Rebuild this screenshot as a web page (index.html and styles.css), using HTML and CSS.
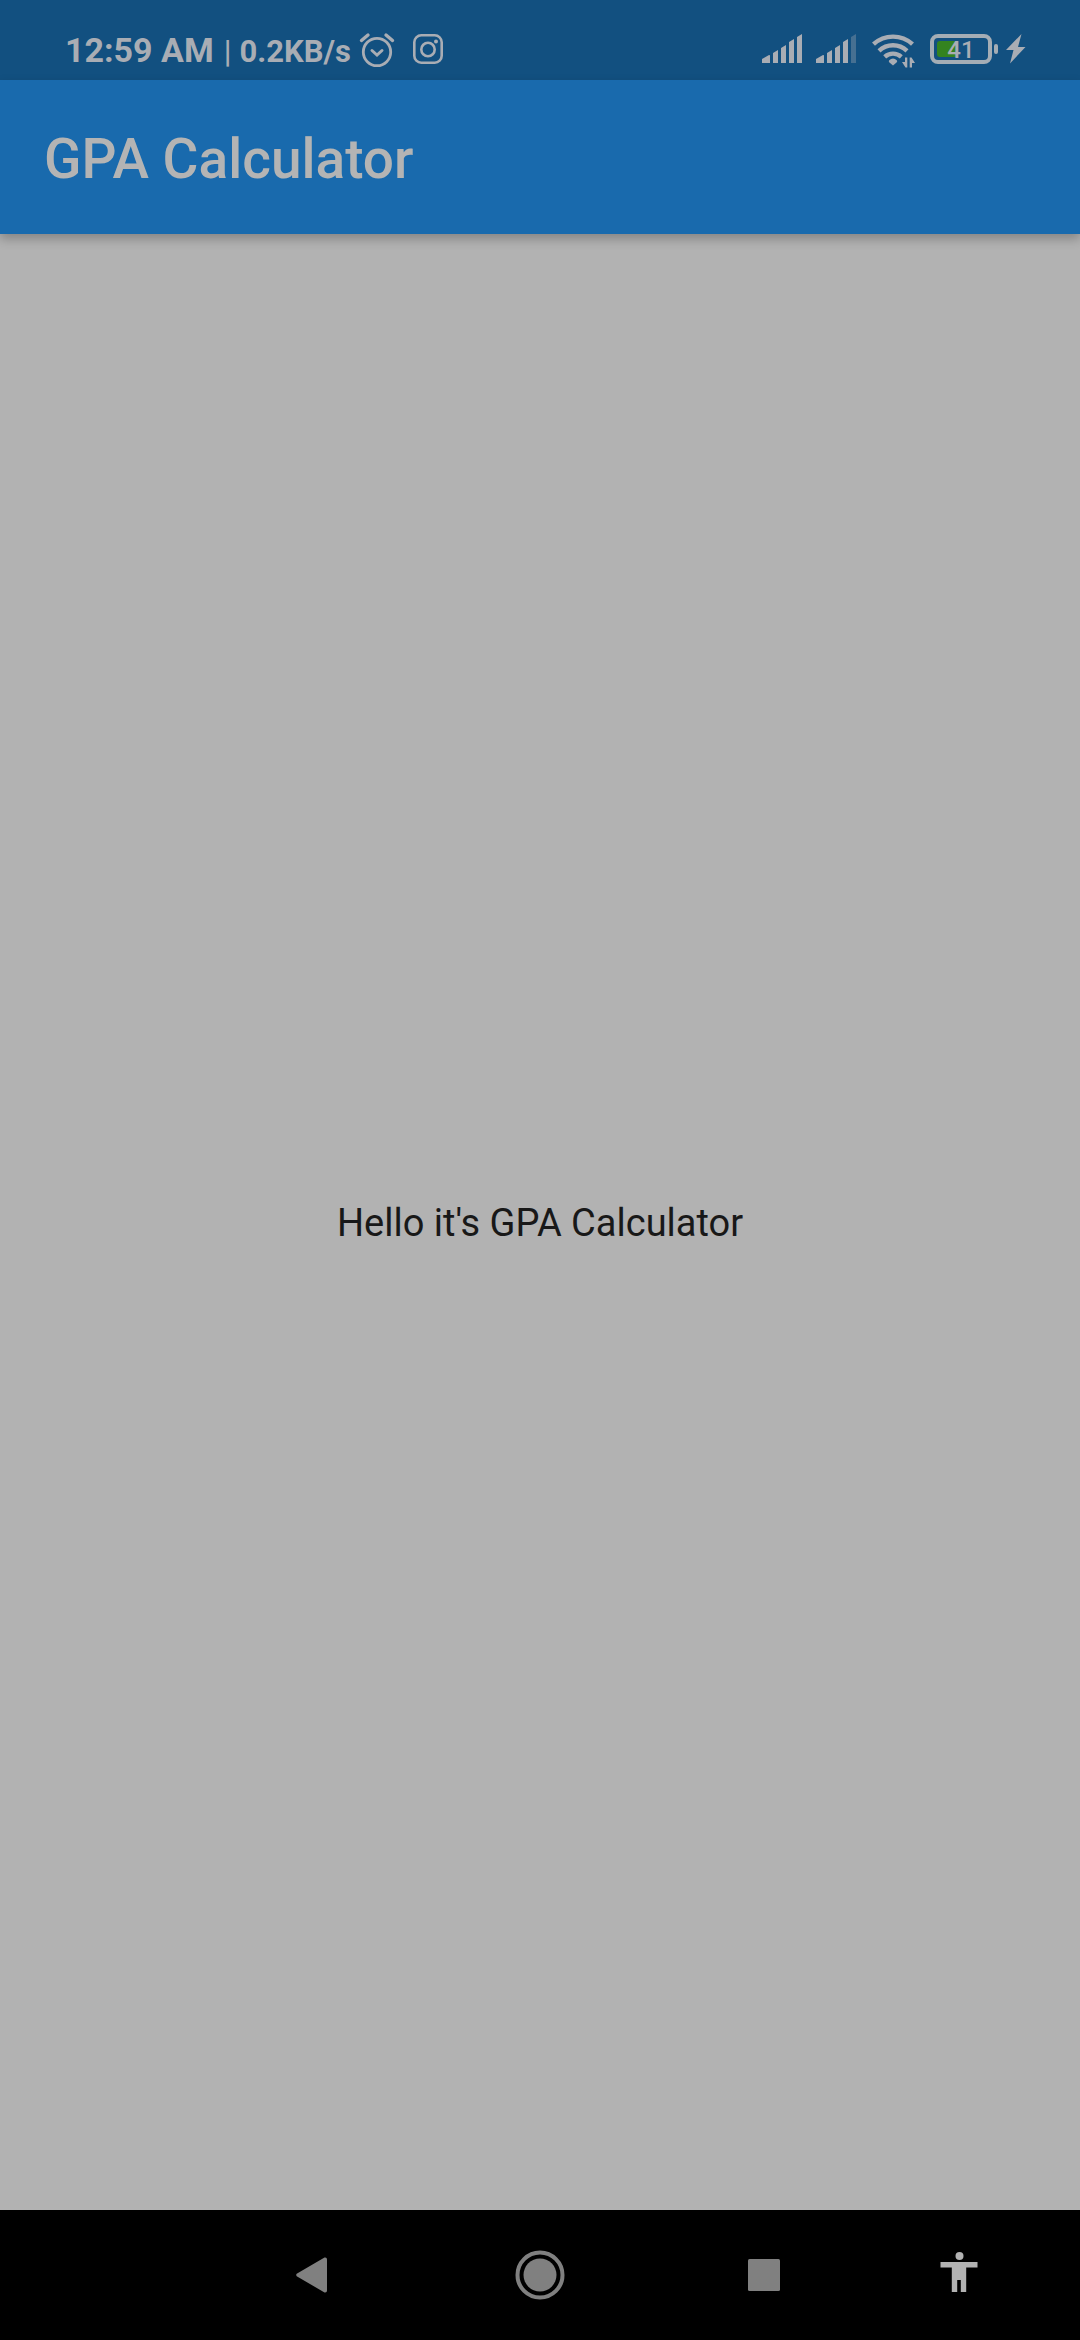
FILE: index.html
```html
<!DOCTYPE html>
<html lang="en">
<head>
<meta charset="utf-8">
<meta name="viewport" content="width=device-width, initial-scale=1">
<title>GPA Calculator</title>
<link rel="stylesheet" href="styles.css">
</head>
<body>
<div class="status-bar">
  <div class="status-left">
    <span class="clock">12:59 AM</span>
    <span class="divider">|</span>
    <span class="speed">0.2KB/s</span>
    <svg class="icon-alarm" width="36" height="36" viewBox="0 0 36 36" fill="none" stroke="currentColor" stroke-linecap="round" aria-label="Alarm">
      <circle cx="18" cy="20" r="13.7" stroke-width="2.8"/>
      <path d="M2.500 8.500 9 3M27 3l6.500 5.500" stroke-width="3.4"/>
      <path d="m13 18.500 5 4.500 5-4.500" stroke-width="3"/>
    </svg>
    <svg class="icon-camera" width="30" height="36" viewBox="0 0 30 36" fill="none" stroke="currentColor" aria-label="Instagram">
      <rect x="1.3" y="4.300" width="27.400" height="27.400" rx="7" stroke-width="2.6"/>
      <circle cx="15" cy="18.500" r="6.700" stroke-width="2.6"/>
      <circle cx="23" cy="10.500" r="2" fill="currentColor" stroke="none"/>
    </svg>
  </div>
  <div class="status-right">
    <svg class="icon-signal" width="40" height="30" viewBox="0 0 40 30" fill="currentColor" aria-label="Signal, SIM 1">
      <path d="M0 25l7-4q1-.5 1 1v7H0zM11 19l5-3v13h-5zM19 14l5-3v18h-5zM27 8l5-3v24h-5zM35 3l5-3v29h-5z"/>
    </svg>
    <svg class="icon-signal" width="40" height="30" viewBox="0 0 40 30" fill="currentColor" aria-label="Signal, SIM 2">
      <path d="M0 25l7-4q1-.5 1 1v7H0zM11 19l5-3v13h-5zM19 14l5-3v18h-5zM27 8l5-3v24h-5z"/>
      <path d="M35 3l5-3v29h-5z" opacity=".35"/>
    </svg>
    <svg class="icon-wifi" width="43" height="34" viewBox="0 0 43 34" fill="none" stroke="currentColor" aria-label="Wi-Fi">
      <path d="M1.500 10.200a29 29 0 0 1 39 0M7 16.800a20.500 20.500 0 0 1 28 0M12.700 22.800a12.500 12.500 0 0 1 16.600 0" stroke-width="4.400"/>
      <path d="M17 26.500q4-4 8 0 .6 1-.5 2L21 31.500l-3.500-3q-1.100-1-.5-2z" fill="currentColor" stroke="none"/>
      <path d="M35.300 23.500v10h-1.800l-3.500-5.500h3v-4.500zM37.700 33.500v-10h1.800l3.500 5.500h-3v4.500z" fill="currentColor" stroke="none"/>
    </svg>
    <div class="battery" aria-label="Battery 41 percent, charging">
      <div class="battery-case"><span class="battery-level">41</span></div>
      <div class="battery-tip"></div>
    </div>
    <svg class="icon-bolt" width="20" height="30" viewBox="0 0 20 30" fill="currentColor" aria-hidden="true">
      <path d="M15.500 0 0 16h7.500L4 29.500 19.500 13H12z"/>
    </svg>
  </div>
</div>
<header class="app-bar">
  <h1 class="title">GPA Calculator</h1>
</header>
<main class="content">
  <p class="greeting">Hello it's GPA Calculator</p>
</main>
<nav class="nav-bar">
  <button class="nav-button" type="button" aria-label="Back">
    <svg width="32" height="36" viewBox="0 0 32 36" fill="currentColor"><path d="M.7 16.800 28.500.5Q31 0 31 2.500v31q0 2.500-2.500 2L.7 19.200q-1-1.200 0-2.400z"/></svg>
  </button>
  <button class="nav-button" type="button" aria-label="Home">
    <svg width="50" height="50" viewBox="0 0 50 50" fill="currentColor"><circle cx="25" cy="25" r="22.500" fill="none" stroke="currentColor" stroke-width="4"/><circle cx="25" cy="25" r="16.500"/></svg>
  </button>
  <button class="nav-button" type="button" aria-label="Recent apps">
    <svg width="32" height="32" viewBox="0 0 32 32" fill="currentColor"><rect width="32" height="32" rx="1.500"/></svg>
  </button>
  <button class="nav-button nav-accessibility" type="button" aria-label="Accessibility">
    <svg width="38" height="44" viewBox="0 0 38 44" fill="currentColor"><circle cx="19.500" cy="6" r="4"/><path d="M.5 12h37v5.500H26.200V42h-5.400V30h-3.600v12h-5.400V17.500H.5z"/></svg>
  </button>
</nav>
</body>
</html>
```

FILE: styles.css
```css
* {
  box-sizing: border-box;
}

body {
  margin: 0;
  min-height: 100vh;
  display: flex;
  flex-direction: column;
  background: #b2b2b2;
  font-family: Roboto, "Noto Sans", sans-serif;
}

.status-bar {
  height: 80px;
  padding: 20px 54px 0 65px;
  display: flex;
  align-items: flex-start;
  justify-content: space-between;
  background: #125080;
  color: #a9adb4;
}

.status-left {
  display: flex;
  align-items: baseline;
  font-weight: 700;
  line-height: 60px;
  height: 60px;
}

.status-bar svg {
  display: block;
  flex: none;
}

.clock {
  font-size: 34px;
}

.divider {
  margin: 0 8px 0 10px;
  font-size: 31px;
  font-weight: 500;
}

.speed {
  font-size: 31px;
}

.icon-alarm {
  align-self: flex-start;
  margin: 12px 0 0 8px;
}

.icon-camera {
  align-self: flex-start;
  margin: 11px 0 0 18px;
}

.status-right {
  display: flex;
  align-items: flex-start;
  padding-top: 14px;
}

.icon-signal {
  margin-right: 14px;
}

.icon-wifi {
  margin: 0 15px 0 2px;
}

.battery {
  display: flex;
  align-items: center;
  gap: 2px;
  margin-right: 8px;
}

.battery-case {
  width: 62px;
  height: 30px;
  padding: 3px;
  border: 4px solid #a4adb5;
  border-radius: 8px;
}

.battery-level {
  display: block;
  height: 16px;
  border-radius: 3px;
  background: linear-gradient(to right, #34831f 41%, transparent 41%);
  font-size: 24px;
  font-weight: 500;
  line-height: 18px;
  text-align: center;
}

.battery-tip {
  width: 4px;
  height: 10px;
  border-radius: 2px;
  background: #a4adb5;
}

.app-bar {
  height: 154px;
  padding: 4px 44px 0;
  display: flex;
  align-items: center;
  background: #196aad;
  box-shadow: 0 5px 10px rgba(0, 0, 0, 0.25);
}

.title {
  margin: 0;
  color: #b4b4b4;
  font-size: 55px;
  font-weight: 500;
  line-height: 64px;
}

.content {
  flex: 1;
  display: flex;
  align-items: center;
  justify-content: center;
  padding-top: 2px;
}

.greeting {
  margin: 0;
  color: #181818;
  font-size: 38px;
  line-height: 46px;
}

.nav-bar {
  height: 130px;
  padding: 0 34px 0 200px;
  display: grid;
  grid-template-columns: 224fr 232fr 216fr 174fr;
  background: #000;
}

.nav-button {
  display: flex;
  align-items: center;
  justify-content: center;
  padding: 0;
  border: 0;
  background: none;
  color: #808080;
}

.nav-accessibility {
  padding-bottom: 6px;
  color: #b2b2b2;
}
```
